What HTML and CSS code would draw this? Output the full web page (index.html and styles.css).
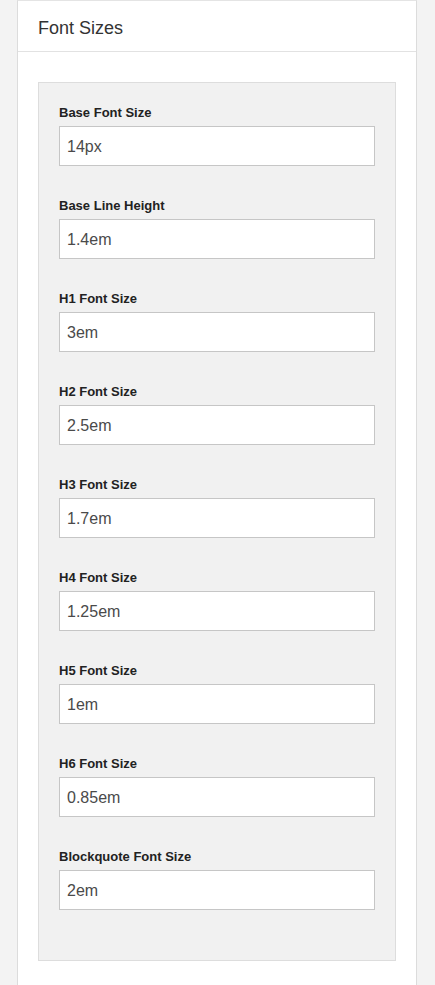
FILE: index.html
```html
<!DOCTYPE html>
<html lang="en">
<head>
<meta charset="utf-8">
<title>Font Sizes</title>
<link rel="stylesheet" href="styles.css">
</head>
<body>
<div class="card">
  <div class="card-header">Font Sizes</div>
  <div class="card-body">
    <div class="panel">
      <div class="field"><label class="field-label">Base Font Size</label><input class="field-input" type="text" value="14px"></div>
      <div class="field"><label class="field-label">Base Line Height</label><input class="field-input" type="text" value="1.4em"></div>
      <div class="field"><label class="field-label">H1 Font Size</label><input class="field-input" type="text" value="3em"></div>
      <div class="field"><label class="field-label">H2 Font Size</label><input class="field-input" type="text" value="2.5em"></div>
      <div class="field"><label class="field-label">H3 Font Size</label><input class="field-input" type="text" value="1.7em"></div>
      <div class="field"><label class="field-label">H4 Font Size</label><input class="field-input" type="text" value="1.25em"></div>
      <div class="field"><label class="field-label">H5 Font Size</label><input class="field-input" type="text" value="1em"></div>
      <div class="field"><label class="field-label">H6 Font Size</label><input class="field-input" type="text" value="0.85em"></div>
      <div class="field"><label class="field-label">Blockquote Font Size</label><input class="field-input" type="text" value="2em"></div>
    </div>
  </div>
</div>
</body>
</html>
```
FILE: styles.css
```css
* { box-sizing: border-box; }
html, body {
  margin: 0;
  padding: 0;
  background: #f3f3f3;
  font-family: "Liberation Sans", Arial, sans-serif;
}
.card {
  margin: 0 18px 0 17px;
  background: #fff;
  border: 1px solid #dcdcdc;
  border-top-color: #e4e4e4;
  min-height: 1000px;
}
.card-header {
  height: 51px;
  padding: 4px 20px 0;
  line-height: 46px;
  font-size: 18px;
  color: #333;
  border-bottom: 1px solid #e2e2e2;
}
.card-body {
  padding: 30px 20px;
}
.panel {
  background: #f1f1f1;
  border: 1px solid #dddddd;
  padding: 20px 20px 20px;
}
.field {
  display: flex;
  flex-direction: column;
  margin-bottom: 30px;
}
.field-label {
  display: block;
  font-size: 13px;
  font-weight: bold;
  line-height: 18px;
  color: #222;
  margin: 1px 0 4px;
}
.field-input {
  width: 100%;
  height: 40px;
  border: 1px solid #c6c6c6;
  background: #fff;
  padding: 1px 7px 0;
  font-family: "Liberation Sans", Arial, sans-serif;
  font-size: 16px;
  color: #4a4a4a;
  outline: none;
  border-radius: 0;
  margin: 0;
}
```
